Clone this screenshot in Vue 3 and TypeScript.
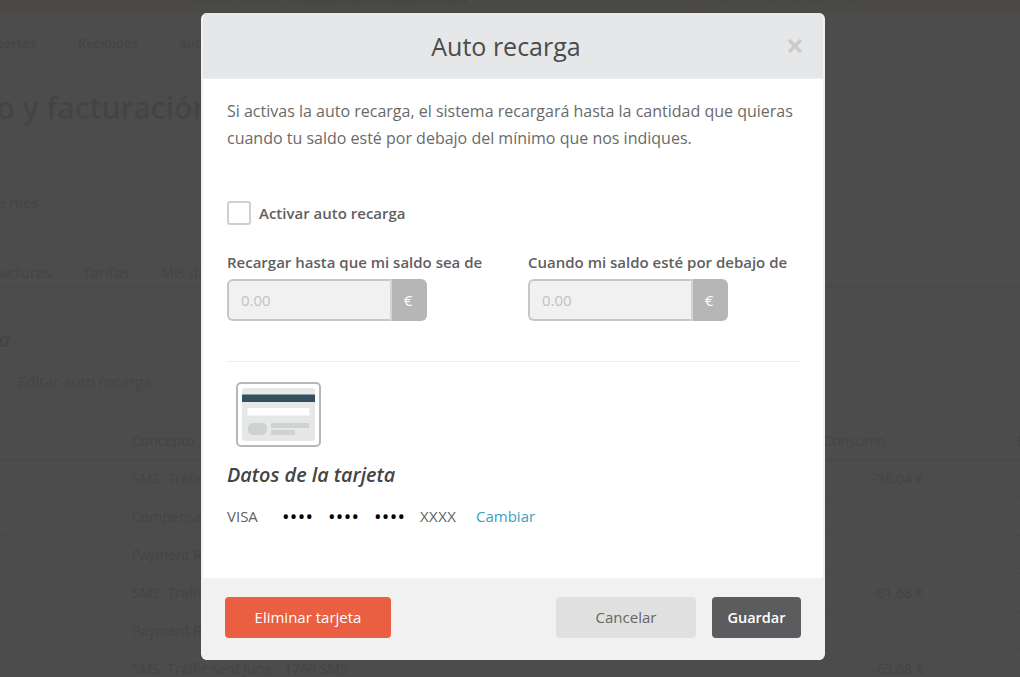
<template>
  <div class="page">
    <div class="backdrop-page" aria-hidden="true">
      <div class="topbar">
        <span class="session">Sesión como: <b>rafadoble@mensatek.com</b></span>
        <span class="top-btn"></span>
        <span class="phone">Tel.: 91 123 87 65 - 24h</span>
      </div>
      <nav class="mainnav">
        <span v-for="item in navItems" :key="item">{{ item }}</span>
      </nav>
      <h1 class="page-title">Saldo y consumo y facturación</h1>
      <p class="month">Consumo de este mes</p>
      <div class="tabs">
        <span v-for="tab in tabs" :key="tab">{{ tab }}</span>
      </div>
      <h2 class="section-title">Auto recarga</h2>
      <p class="edit-link">Editar auto recarga</p>
      <div class="tbl-head">
        <span>Concepto</span>
        <span class="consumo">Consumo</span>
        <span class="estado">Estado</span>
      </div>
      <div v-for="row in rows" :key="row.name + row.amount" class="tbl-row">
        <span class="concept">{{ row.name }}</span>
        <span class="amount">{{ row.amount }}</span>
      </div>
    </div>

    <div class="overlay">
      <div class="modal">
        <header class="modal-head">
          <h3>Auto recarga</h3>
          <button type="button" class="close" aria-label="Cerrar">
            <svg viewBox="0 0 16 16" width="16" height="16" fill="none" stroke="#cbcbcb" stroke-width="3.6">
              <path d="M2 2 14 14M14 2 2 14" />
            </svg>
          </button>
        </header>

        <div class="modal-body">
          <p class="intro">
            Si activas la auto recarga, el sistema recargará hasta la cantidad que quieras
            cuando tu saldo esté por debajo del mínimo que nos indiques.
          </p>

          <label class="check-row">
            <span class="check"></span>
            <span>Activar auto recarga</span>
          </label>

          <div class="fields">
            <div v-for="field in fields" :key="field" class="field">
              <div class="field-label">{{ field }}</div>
              <div class="input-group">
                <span class="input">0.00</span>
                <span class="addon">€</span>
              </div>
            </div>
          </div>

          <hr class="sep" />

          <svg class="card-icon" viewBox="0 0 85 65" width="85" height="65">
            <rect x="1" y="1" width="83" height="63" rx="4" fill="#fff" stroke="#b7b7b7" stroke-width="2" />
            <rect x="6" y="6" width="73" height="53" rx="3" fill="#e6e7e8" />
            <rect x="6" y="12.5" width="73" height="7.5" fill="#34505f" />
            <rect x="11.5" y="26" width="62" height="7.5" fill="#fff" />
            <rect x="12" y="41" width="19" height="12" rx="5" fill="#d0d1d1" />
            <rect x="35" y="41" width="38" height="5" fill="#d0d1d1" />
            <rect x="35" y="48" width="24" height="5" fill="#d0d1d1" />
          </svg>

          <h4 class="card-title">Datos de la tarjeta</h4>

          <div class="card-row">
            <span class="brand">VISA</span>
            <span v-for="n in 3" :key="n" class="dots">••••</span>
            <span class="last">XXXX</span>
            <a class="change">Cambiar</a>
          </div>
        </div>

        <footer class="modal-foot">
          <button type="button" class="btn danger">Eliminar tarjeta</button>
          <div class="foot-right">
            <button type="button" class="btn cancel">Cancelar</button>
            <button type="button" class="btn save">Guardar</button>
          </div>
        </footer>
      </div>
    </div>
  </div>
</template>

<script setup lang="ts">
interface Row {
  name: string
  amount: string
}

const navItems = ['Importes', 'Recibidos', 'Subcuentas']
const tabs = ['Facturas', 'Tarifas', 'Mis datos']
const fields = ['Recargar hasta que mi saldo sea de', 'Cuando mi saldo esté por debajo de']

const rows: Row[] = [
  { name: 'SMS: Tráfico enviado julio', amount: '-36.04 €' },
  { name: 'Compensación de saldo', amount: '' },
  { name: 'Payment Received', amount: '' },
  { name: 'SMS: Traffic sent July', amount: '-81.68 €' },
  { name: 'Payment Received', amount: '' },
  { name: 'SMS: Traffic sent June - 1769 SMS', amount: '-63.68 €' },
]
</script>

<style>
html,
body {
  margin: 0;
  background: #4c4c4d;
}
</style>

<style scoped>
.page {
  position: relative;
  width: 1020px;
  height: 677px;
  overflow: hidden;
  background: #4c4c4d;
  font-family: "Open Sans", "Noto Sans", sans-serif;
}

/* dimmed page behind the modal */
.backdrop-page {
  color: #444446;
  font-size: 14px;
}
.topbar {
  height: 13px;
  background: #4b4946;
  overflow: hidden;
  display: flex;
  font-size: 14px;
  line-height: 14px;
}
.session {
  margin: -9px 0 0 193px;
  width: 487px;
  white-space: nowrap;
}
.top-btn {
  flex: none;
  box-sizing: border-box;
  width: 19px;
  height: 12px;
  margin-right: 13px;
  border-right: 1px solid #564347;
  border-bottom: 1px solid #564347;
}
.phone {
  margin-top: -9px;
  white-space: nowrap;
}
.mainnav {
  display: flex;
  gap: 42px;
  margin: 22px 0 0 -21px;
  font-size: 13px;
  font-weight: 600;
  line-height: 16px;
}
.page-title {
  margin: 38px 0 0 -229px;
  font-size: 30px;
  font-weight: 600;
  line-height: 38px;
  white-space: nowrap;
}
.month {
  margin: 65px 0 0 -116px;
  font-size: 15px;
  line-height: 20px;
}
.tabs {
  display: flex;
  gap: 31px;
  margin-top: 50px;
  margin-left: -8px;
  padding-bottom: 4px;
  height: 20px;
  border-bottom: 1px solid #464647;
  font-size: 15px;
  line-height: 20px;
}
.section-title {
  margin: 41px 0 0 -108px;
  font-size: 20px;
  font-style: italic;
  font-weight: 600;
  line-height: 24px;
}
.edit-link {
  margin: 19px 0 0 18px;
  font-size: 15px;
  line-height: 20px;
}
.tbl-head {
  display: flex;
  margin-top: 40px;
  padding: 0 0 8px 132px;
  height: 20px;
  line-height: 20px;
  border-bottom: 1px solid #464647;
}
.consumo {
  margin-left: 629px;
}
.estado {
  margin-left: 131px;
}
.tbl-row {
  display: flex;
  justify-content: space-between;
  box-sizing: border-box;
  height: 38px;
  padding: 9px 96px 0 132px;
  line-height: 20px;
  border-bottom: 1px dotted #464647;
}
.amount {
  color: #474343;
}

/* modal */
.overlay {
  position: absolute;
  inset: 0;
  display: flex;
  justify-content: center;
  align-items: flex-start;
  padding-top: 13px;
}
.modal {
  box-sizing: border-box;
  width: 624px;
  height: 647px;
  margin-left: 6px;
  border: 2px solid #f1f1f1;
  border-top: 0;
  border-bottom: 0;
  border-radius: 6px;
  overflow: hidden;
  background: #fff;
  display: flex;
  flex-direction: column;
  color: #666;
}
.modal-head {
  position: relative;
  height: 66px;
  flex: none;
  box-sizing: border-box;
  padding-right: 14px;
  background: #e6e7e8;
  border-bottom: 1px solid #ecedec;
  display: flex;
  align-items: center;
  justify-content: center;
}
.modal-head h3 {
  margin: 0;
  font-size: 25px;
  font-weight: 500;
  color: #4b4b4b;
  line-height: 68px;
}
.close {
  position: absolute;
  top: 25px;
  right: 20px;
  padding: 0;
  border: 0;
  background: none;
  display: block;
  height: 16px;
}
.close svg {
  display: block;
}
.modal-body {
  flex: 1;
  padding: 19px 24px 0;
}
.intro {
  margin: 0;
  font-size: 16px;
  line-height: 27px;
  color: #6a6a6a;
  width: 573px;
}
.check-row {
  display: flex;
  align-items: center;
  gap: 8px;
  margin-top: 49px;
  font-size: 15px;
  font-weight: 600;
  color: #5f5f5f;
}
.check {
  box-sizing: border-box;
  width: 24px;
  height: 24px;
  border: 2px solid #cfcfcf;
  border-radius: 3px;
  background: #fff;
}
.fields {
  display: flex;
  gap: 46px;
  margin-top: 27px;
}
.field {
  width: 255px;
}
.field-label {
  font-size: 15px;
  font-weight: 600;
  line-height: 20px;
  color: #5f5f5f;
  white-space: nowrap;
}
.input-group {
  display: flex;
  width: 200px;
  height: 42px;
  margin-top: 7px;
}
.input {
  flex: 1;
  box-sizing: border-box;
  padding-left: 12px;
  border: 2px solid #c6c6c6;
  border-right: 2px solid #d4d4d4;
  border-radius: 6px 0 0 6px;
  background: #f1f1f1;
  color: #c2c2c2;
  font-size: 15px;
  line-height: 38px;
}
.addon {
  box-sizing: border-box;
  width: 35px;
  padding-right: 3px;
  background: #b6b6b6;
  border-radius: 0 6px 6px 0;
  color: #fff;
  font-size: 15px;
  line-height: 42px;
  text-align: center;
}
.sep {
  margin: 40px 0 0;
  width: 573px;
  border: 0;
  border-top: 1px solid #ececec;
}
.card-icon {
  display: block;
  margin: 20px 0 0 9px;
}
.card-title {
  margin: 14px 0 0;
  font-size: 19.8px;
  font-style: italic;
  font-weight: 600;
  line-height: 28px;
  color: #444;
}
.card-row {
  display: flex;
  align-items: center;
  margin-top: 15px;
  height: 24px;
  font-size: 15px;
  color: #5f5f5f;
}
.brand {
  width: 55px;
}
.dots {
  width: 46px;
  color: #000;
  font-size: 20px;
  letter-spacing: 0.3px;
  white-space: nowrap;
}
.last {
  width: 56px;
  letter-spacing: 0.4px;
}
.change {
  color: #3b9fc2;
}
.modal-foot {
  flex: none;
  height: 82px;
  box-sizing: border-box;
  background: #f1f1f1;
  padding: 19px 22px 0;
  display: flex;
  justify-content: space-between;
  align-items: flex-start;
}
.foot-right {
  display: flex;
  gap: 16px;
}
.btn {
  height: 41px;
  padding: 0;
  border: 0;
  border-radius: 4px;
  font-family: inherit;
  font-size: 15px;
  line-height: 41px;
  font-weight: 500;
}
.danger {
  width: 166px;
  background: #ea5e42;
  color: #fff;
}
.cancel {
  width: 140px;
  background: #e0e0e0;
  color: #666;
  font-weight: 400;
}
.save {
  width: 89px;
  background: #5c5c5e;
  color: #fff;
  font-size: 14.5px;
  font-weight: 600;
}
</style>
